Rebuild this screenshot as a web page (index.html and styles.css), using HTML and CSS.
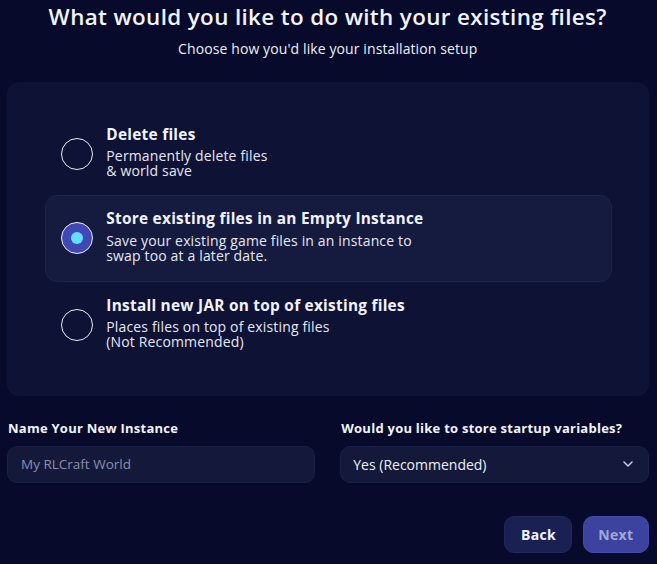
FILE: index.html
```html
<!DOCTYPE html>
<html lang="en">
<head>
<meta charset="utf-8">
<title>Existing files</title>
<link rel="stylesheet" href="styles.css">
</head>
<body>
<main class="page">
  <header class="head">
    <h1 class="title">What would you like to do with your existing files?</h1>
    <p class="subtitle">Choose how you'd like your installation setup</p>
  </header>

  <section class="panel">
    <div class="option first">
      <span class="radio"></span>
      <div class="opt-text">
        <div class="opt-title">Delete files</div>
        <div class="opt-desc">Permanently delete files<br>&amp; world save</div>
      </div>
    </div>
    <div class="option selected">
      <span class="radio on"><span class="dot"></span></span>
      <div class="opt-text">
        <div class="opt-title">Store existing files in an Empty Instance</div>
        <div class="opt-desc">Save your existing game files in an instance to<br>swap too at a later date.</div>
      </div>
    </div>
    <div class="option last">
      <span class="radio"></span>
      <div class="opt-text">
        <div class="opt-title">Install new JAR on top of existing files</div>
        <div class="opt-desc">Places files on top of existing files<br>(Not Recommended)</div>
      </div>
    </div>
  </section>

  <section class="fields">
    <div class="field">
      <label class="label">Name Your New Instance</label>
      <div class="input"><span class="placeholder">My RLCraft World</span></div>
    </div>
    <div class="field">
      <label class="label">Would you like to store startup variables?</label>
      <div class="input select">
        <span>Yes (Recommended)</span>
        <svg class="chev" width="10" height="6" viewBox="0 0 10 6"><path d="M1 1l4 4 4-4" fill="none" stroke="#c9cce6" stroke-width="1.5" stroke-linecap="round" stroke-linejoin="round"/></svg>
      </div>
    </div>
  </section>

  <footer class="actions">
    <button class="btn back">Back</button>
    <button class="btn next">Next</button>
  </footer>
</main>
</body>
</html>
```

FILE: styles.css
```css
* { box-sizing: border-box; }
html, body { margin: 0; padding: 0; }
body {
  background: #070a2b;
  color: #f2f3fa;
  font-family: "Open Sans", "Lato", sans-serif;
  width: 657px;
  height: 564px;
  overflow: hidden;
}
.page {
  padding: 0 8.5px 0 7px;
}
.head {
  text-align: center;
}
.title {
  margin: 0;
  padding-top: 2px;
  font-size: 22.4px;
  font-weight: 600;
  line-height: 30px;
  letter-spacing: 0.36px;
}
.subtitle {
  margin: 7.6px 0 0;
  font-size: 14px;
  line-height: 18px;
  letter-spacing: 0.1px;
  color: #eef0f8;
}
.panel {
  margin-top: 24.4px;
  background: #0e1234;
  border-radius: 12px;
  padding: 30px 37px 28px 38px;
  height: 314px;
}
.option {
  display: flex;
  align-items: center;
  height: 85px;
  padding-left: 15px;
  border: 1px solid transparent;
  border-radius: 12px;
}
.option.first { height: 84px; }
.option.last { height: 86px; }
.option.selected {
  background: #151a3f;
  border-color: #1e234b;
  height: 87px;
  margin-top: -1px;
}
.radio {
  width: 32px;
  height: 32px;
  border: 1.5px solid #e9ebf5;
  border-radius: 50%;
  flex: none;
  display: flex;
  align-items: center;
  justify-content: center;
}
.radio.on {
  background: #4048b5;
}
.dot {
  width: 12px;
  height: 12px;
  border-radius: 50%;
  background: #5fe0ff;
}
.opt-text {
  margin-left: 13.3px;
  margin-top: -5px;
}
.opt-title {
  font-size: 15.4px;
  font-weight: 700;
  line-height: 20px;
  letter-spacing: 0.26px;
  margin-bottom: 3.7px;
}
.opt-desc {
  font-size: 14px;
  line-height: 15px;
  letter-spacing: 0.15px;
  color: #e6e8f3;
}
.fields {
  display: grid;
  grid-template-columns: 1fr 1fr;
  column-gap: 25px;
  margin-top: 23px;
}
.label {
  display: block;
  font-size: 13px;
  font-weight: 700;
  line-height: 18px;
  letter-spacing: 0.25px;
  margin-left: 1px;
}
.input {
  margin-top: 9px;
  height: 37px;
  border-radius: 10px;
  background: #141939;
  border: 1px solid #1b2046;
  display: flex;
  align-items: center;
  padding: 0 13px;
  font-size: 14px;
}
.placeholder {
  color: #8a8eae;
  font-size: 13.5px;
}
.select {
  justify-content: space-between;
  padding: 0 15px 0 12px;
  color: #eef0f8;
}
.actions {
  display: flex;
  justify-content: flex-end;
  gap: 10.6px;
  margin-top: 33px;
}
.btn {
  font-family: inherit;
  font-size: 14px;
  font-weight: 700;
  height: 37px;
  border-radius: 10px;
  padding: 0;
  border: 1px solid transparent;
  letter-spacing: 0.3px;
}
.back {
  width: 68px;
  background: #1b2053;
  border-color: #22275c;
  color: #f2f3fa;
}
.next {
  width: 65.5px;
  background: #3c429f;
  border-color: #454ba8;
  color: #a3a7d6;
}
```
